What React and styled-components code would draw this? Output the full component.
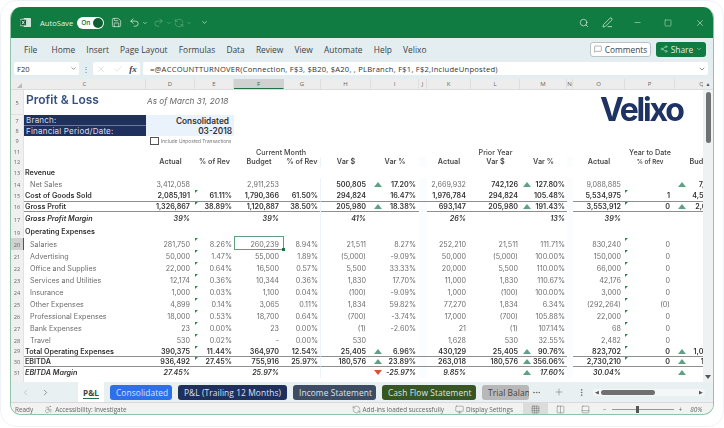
import React from "react";
import styled, { createGlobalStyle } from "styled-components";
import {
  Search,
  PenLine,
  Minus,
  Square,
  X,
  Check,
  Undo2,
  Redo2,
  Save,
  ChevronDown,
  ChevronLeft,
  ChevronRight,
  MessageSquare,
  Share2,
  Plus,
  MoreHorizontal,
  MoreVertical,
  Accessibility,
  RefreshCcw,
  Monitor,
  Grid3x3,
  Columns2,
  PanelBottom,
} from "lucide-react";

const GlobalStyle = createGlobalStyle`
  html, body {
    margin: 0;
    background: #fff;
  }
  * {
    box-sizing: border-box;
  }
`;

const chromeFont = `"Open Sans", "Noto Sans", sans-serif`;
const sheetFont = `Inter, "Open Sans", sans-serif`;

const Page = styled.div`
  width: 724px;
  height: 427px;
  padding: 6px 9px;
  border: 1px solid #eef2f9;
  border-radius: 16px;
  font-family: ${chromeFont};
  filter: blur(0.45px);
`;

const Window = styled.div`
  width: 704px;
  height: 408px;
  display: flex;
  flex-direction: column;
  border-radius: 11px;
  overflow: hidden;
  border: 1px solid #8fc4a8;
  border-top: 0;
  background: #fff;
`;

const TitleBar = styled.div`
  height: 31px;
  flex: none;
  display: flex;
  align-items: center;
  padding: 0 9px;
  background: #107c41;
  color: #fff;
`;

const AppMark = styled.svg`
  width: 11px;
  height: 11px;
  margin-right: 9px;
`;

const TitleLabel = styled.span`
  font-size: 7.6px;
  margin-right: 4px;
  color: #e4f1ea;
`;

const Toggle = styled.div`
  width: 27px;
  height: 12px;
  margin-right: 7px;
  padding: 0 1px 0 4px;
  display: flex;
  align-items: center;
  justify-content: space-between;
  border-radius: 7px;
  background: #fff;
  color: #107c41;
  font-size: 6.5px;
  font-weight: 600;
  &::after {
    content: "";
    width: 10px;
    height: 10px;
    border-radius: 50%;
    background: #0e5e33;
  }
`;

const TitleIcons = styled.div`
  display: flex;
  align-items: center;
  gap: ${(p) => p.$gap || 4}px;
  margin-left: ${(p) => (p.$right ? "auto" : "0")};
  opacity: ${(p) => p.$fade || 1};
`;

const MenuBar = styled.div`
  height: 22px;
  flex: none;
  display: flex;
  align-items: center;
  gap: 11.2px;
  padding: 0 7px 0 13px;
  background: #e4eef1;
  font-size: 8.4px;
  color: #3b4347;
`;

const FileItem = styled.span`
  margin-right: 3px;
`;

const OutlineButton = styled.div`
  margin-left: auto;
  width: 61px;
  height: 15px;
  display: flex;
  align-items: center;
  justify-content: center;
  gap: 3px;
  background: #fff;
  border: 1px solid #b9c2c5;
  border-radius: 3px;
`;

const ShareButton = styled.div`
  margin-left: -6.2px;
  width: 50px;
  height: 15px;
  display: flex;
  align-items: center;
  justify-content: center;
  gap: 3px;
  background: #107c41;
  border-radius: 3px;
  color: #dff0e6;
`;

const FormulaBar = styled.div`
  height: 19px;
  flex: none;
  display: flex;
  align-items: center;
  padding: 0 5px 2px 3px;
  background: #e4eef1;
  font-size: 7.6px;
  color: #333;
`;

const NameBox = styled.div`
  width: 65px;
  height: 13px;
  display: flex;
  align-items: center;
  justify-content: space-between;
  padding: 0 2px 0 3px;
  background: #fff;
  border-radius: 2px;
`;

const Dots = styled.div`
  width: 14px;
  text-align: center;
  color: #777;
  font-size: 8px;
`;

const FormulaButtons = styled.div`
  width: 47px;
  height: 13px;
  margin-right: 3px;
  display: flex;
  align-items: center;
  justify-content: space-around;
  background: #fff;
  border-radius: 2px;
  color: #c4c9cb;
`;

const Fx = styled.span`
  font-family: "Liberation Serif", serif;
  font-style: italic;
  font-size: 9px;
  font-weight: 700;
  color: #444;
`;

const FormulaInput = styled.div`
  flex: 1;
  height: 13px;
  display: flex;
  align-items: center;
  justify-content: space-between;
  padding: 0 2px 0 7px;
  background: #fff;
  border-radius: 2px;
  white-space: nowrap;
  letter-spacing: 0.03em;
`;

const columns = [
  { key: "C", width: 122, pad: 0 },
  { key: "D", width: 49, pad: 5 },
  { key: "E", width: 39, pad: 2 },
  { key: "F", width: 50, pad: 5 },
  { key: "G", width: 37, pad: 2 },
  { key: "H", width: 50, pad: 5 },
  { key: "I", width: 48, pad: 3 },
  { key: "J", width: 8, pad: 0 },
  { key: "K", width: 44, pad: 5 },
  { key: "L", width: 49, pad: 2 },
  { key: "M", width: 47, pad: 2 },
  { key: "N", width: 6, pad: 0 },
  { key: "O", width: 52, pad: 4 },
  { key: "P", width: 50, pad: 5 },
  { key: "Q", width: 54, pad: 2 },
];

const gridTemplate = `13px ${columns.map((c) => c.width + "px").join(" ")}`;

const HeaderStrip = styled.div`
  height: 11px;
  flex: none;
  display: flex;
  background: #ededed;
  border-bottom: 1px solid #dcdcdc;
`;

const Corner = styled.div`
  width: 13px;
  flex: none;
  display: flex;
  align-items: flex-end;
  justify-content: flex-end;
  padding: 0 2px 1px 0;
  &::after {
    content: "";
    border-left: 5px solid transparent;
    border-bottom: 5px solid #bbb;
  }
`;

const HeaderColumns = styled.div`
  flex: 1;
  min-width: 0;
  display: flex;
  overflow: hidden;
`;

const HeaderCell = styled.div`
  width: ${(p) => p.$w}px;
  flex: none;
  text-align: center;
  font-size: 6px;
  line-height: 10px;
  color: ${(p) => (p.$on ? "#1c6b3f" : "#666")};
  background: ${(p) => (p.$on ? "#cfd2d1" : "transparent")};
  border-right: 1px solid ${(p) => (p.$on ? "transparent" : "#dedede")};
  border-bottom: ${(p) => (p.$on ? "1.5px solid #217346" : "0")};
`;

const HeaderScroll = styled.div`
  width: 10px;
  flex: none;
  background: #e9eff1;
  color: #555;
  font-size: 5px;
  line-height: 10px;
  text-align: center;
`;

const SheetArea = styled.div`
  position: relative;
  height: 292px;
  flex: none;
  display: flex;
  overflow: hidden;
`;

const Sheet = styled.div`
  flex: 1;
  min-width: 0;
  overflow: hidden;
  font-family: ${sheetFont};
  font-size: 7.2px;
  color: #3a3a3a;
`;

const Row = styled.div`
  display: grid;
  grid-template-columns: ${gridTemplate};
  width: 745px;
  height: ${(p) => p.$h}px;
`;

const RowNum = styled.div`
  display: flex;
  align-items: flex-end;
  justify-content: center;
  padding-bottom: 1px;
  font-family: ${chromeFont};
  font-size: 5.6px;
  line-height: 8px;
  color: #666;
  background: ${(p) => (p.$on ? "#cfd2d1" : "#f0f0f0")};
  border-bottom: ${(p) => (p.$line ? "1px solid #e0e0e0" : "0")};
  border-right: ${(p) => (p.$on ? "1.5px solid #217346" : "1px solid #e2e2e2")};
  overflow: hidden;
`;

const Cell = styled.div`
  position: relative;
  min-width: 0;
  display: flex;
  align-items: center;
  justify-content: ${(p) => (p.$arrow ? "space-between" : "flex-end")};
  padding: 0 ${(p) => p.$pad}px 0 ${(p) => (p.$arrow ? 3 : 0)}px;
  white-space: nowrap;
  font-weight: ${(p) => (p.$bold ? 600 : 400)};
  font-style: ${(p) => (p.$italic ? "italic" : "normal")};
  color: ${(p) => (p.$bold ? "#333" : "#6d6d6d")};
  background: ${(p) => (p.$tint ? "#fafcfe" : "transparent")};
  border-top: ${(p) => (p.$ruleTop ? "1px solid #8f8f8f" : "0")};
  border-bottom: ${(p) => (p.$ruleBottom ? "1px solid #8f8f8f" : "0")};
  border-right: ${(p) => (p.$divide ? "1px solid #eef3f9" : "0")};
`;

const Flag = styled.i`
  position: absolute;
  top: 0;
  left: 0;
  border-top: 3px solid #17913f;
  border-right: 3px solid transparent;
`;

const Arrow = styled.i`
  width: 0;
  height: 0;
  flex: none;
  border-left: 4px solid transparent;
  border-right: 4px solid transparent;
  border-bottom: ${(p) => (p.$down ? "0" : "5px solid #5da283")};
  border-top: ${(p) => (p.$down ? "5px solid #d6552c" : "0")};
`;

const LabelCell = styled(Cell)`
  justify-content: flex-start;
  padding-left: ${(p) => (p.$indent ? 6 : 1)}px;
  padding-right: 0;
`;

const TitleCell = styled.div`
  display: flex;
  align-items: flex-end;
  padding-left: 2px;
  font-size: 12px;
  font-weight: 600;
  line-height: 16px;
  color: #34507f;
`;

const AsOf = styled.div`
  display: flex;
  align-items: flex-end;
  padding: 0 0 1px 1px;
  white-space: nowrap;
  font-style: italic;
  font-size: 8.2px;
  line-height: 11px;
  color: #666;
`;

const BranchLabel = styled.div`
  display: flex;
  align-items: center;
  padding-left: 2px;
  background: #1f2f5e;
  color: #d8deea;
  font-size: 8.1px;
  letter-spacing: 0.02em;
  border-bottom: ${(p) => (p.$split ? "1px solid #6d7999" : "0")};
`;

const BranchValue = styled.div`
  grid-column: span 2;
  display: flex;
  align-items: center;
  justify-content: flex-end;
  padding-right: ${(p) => p.$pad}px;
  background: #eaf3fc;
  color: #333;
  font-size: 8.3px;
  font-weight: 600;
`;

const CheckRow = styled.div`
  grid-column: span 2;
  display: flex;
  align-items: center;
  gap: 2px;
  padding-left: 4px;
  white-space: nowrap;
  font-size: 4.8px;
  color: #777;
  &::before {
    content: "";
    width: 7px;
    height: 6px;
    flex: none;
    border: 1px solid #555;
  }
`;

const GroupTitle = styled.div`
  grid-column: ${(p) => p.$from} / ${(p) => p.$to};
  display: flex;
  align-items: flex-end;
  justify-content: center;
  padding-left: ${(p) => p.$shift || 0}px;
  font-size: 7.2px;
  font-weight: 500;
  color: #444;
  white-space: nowrap;
`;

const ColTitle = styled(Cell)`
  justify-content: center;
  padding: 0;
  font-size: ${(p) => (p.$small ? 6.2 : 7.2)}px;
  font-weight: 600;
  color: #484848;
`;

const Logo = styled.div`
  position: absolute;
  top: 2px;
  left: 589px;
  font-family: Inter, sans-serif;
  font-size: 32px;
  font-weight: 700;
  letter-spacing: -2.2px;
  line-height: 36px;
  color: #1f3264;
`;

const Selection = styled.div`
  position: absolute;
  left: 223px;
  top: 146px;
  width: 50px;
  height: 14px;
  border: 1.5px solid #5d9e7f;
  &::after {
    content: "";
    position: absolute;
    right: -2px;
    bottom: -2px;
    width: 3px;
    height: 3px;
    background: #217346;
  }
`;

const ScrollTrack = styled.div`
  position: relative;
  width: 10px;
  flex: none;
  background: #eef2f3;
  &::before {
    content: "";
    position: absolute;
    top: 2px;
    left: 3px;
    width: 5px;
    height: 51px;
    border-radius: 3px;
    background: #6f7273;
  }
  &::after {
    content: "";
    position: absolute;
    bottom: 3px;
    left: 2px;
    border-left: 3px solid transparent;
    border-right: 3px solid transparent;
    border-top: 4px solid #555;
  }
`;

const TabBar = styled.div`
  height: 20px;
  flex: none;
  display: flex;
  align-items: center;
  padding-left: 9px;
  background: #e9f0f1;
  color: #777;
`;

const TabNav = styled.div`
  width: 58px;
  flex: none;
  display: flex;
  gap: 11px;
  padding-left: 1px;
`;

const ActiveTab = styled.div`
  position: relative;
  width: 26px;
  height: 20px;
  flex: none;
  margin-right: 6px;
  display: flex;
  align-items: center;
  justify-content: center;
  background: #fff;
  color: #3c4a43;
  font-size: 8.2px;
  font-weight: 700;
  &::after {
    content: "";
    position: absolute;
    left: 5px;
    right: 5px;
    bottom: 3px;
    height: 1.5px;
    background: #217346;
  }
`;

const SheetTab = styled.div`
  width: ${(p) => p.$w}px;
  height: 15px;
  flex: none;
  margin-right: 6px;
  padding-left: 6px;
  display: flex;
  align-items: center;
  overflow: hidden;
  white-space: nowrap;
  border-radius: 3px;
  background: ${(p) => p.$bg};
  color: ${(p) => p.$fg || "#dbe4ee"};
  font-size: 8.4px;
  letter-spacing: 0.01em;
`;

const TabTools = styled.div`
  width: 58px;
  flex: none;
  margin-left: -3px;
  display: flex;
  justify-content: space-between;
  align-items: center;
  padding-right: 4px;
  color: #666;
`;

const HScroll = styled.div`
  width: 112px;
  height: 7px;
  flex: none;
  margin-left: 3px;
  display: flex;
  align-items: center;
  justify-content: space-between;
  padding: 0 2px;
  border-radius: 4px;
  background: #f4f7f8;
  color: #555;
  font-size: 5px;
`;

const HThumb = styled.div`
  width: 54px;
  height: 5px;
  margin-left: 2px;
  margin-right: auto;
  border-radius: 3px;
  background: #707070;
`;

const StatusBar = styled.div`
  height: 13px;
  flex: none;
  display: flex;
  align-items: center;
  padding-left: 4px;
  background: #f2f2f2;
  border-top: 1px solid #d9d9d9;
  font-size: 6.4px;
  color: #666;
  white-space: nowrap;
`;

const StatusItem = styled.div`
  display: flex;
  align-items: center;
  gap: 2px;
  margin-left: ${(p) => p.$gap || 0}px;
`;

const ViewIcon = styled.div`
  width: 25px;
  height: 13px;
  flex: none;
  display: flex;
  align-items: center;
  justify-content: center;
  margin-left: ${(p) => p.$gap || 0}px;
  background: ${(p) => (p.$on ? "#dcdcdc" : "transparent")};
  color: #555;
`;

const ZoomBar = styled.div`
  width: 62px;
  height: 1px;
  margin: 0 3px;
  position: relative;
  background: #999;
  &::after {
    content: "";
    position: absolute;
    left: 24px;
    top: -3px;
    width: 3px;
    height: 7px;
    background: #555;
  }
`;

const U = "up";
const D = "down";

// [value, arrow] or just the value, per column D..Q
const rowsData = [
  {
    n: 14, h: 12, label: "Net Sales", indent: true,
    D: "3,412,058", F: "2,911,253", H: "500,805", I: ["17.20%", U], K: "2,669,932", L: "742,126",
    M: ["127.80%", U], O: "9,088,885", Q: ["7,111,221", U],
    boldKeys: ["H", "I", "L", "M", "Q"],
  },
  {
    n: 15, h: 10.5, label: "Cost of Goods Sold", bold: true, flags: true,
    D: "2,085,191", E: "61.11%", F: "1,790,366", G: "61.50%", H: "294,824", I: "16.47%", K: "1,976,784",
    L: "294,824", M: "105.48%", O: "5,534,975", P: "1", Q: "4,580,221",
  },
  {
    n: 16, h: 10.5, label: "Gross Profit", bold: true, flags: true, ruleTop: true, ruleBottom: true,
    D: "1,326,867", E: "38.89%", F: "1,120,887", G: "38.50%", H: "205,980", I: ["18.38%", U], K: "693,147",
    L: "205,980", M: ["191.43%", U], O: "3,553,912", P: "0", Q: ["2,611,810", U],
  },
  {
    n: 17, h: 14, label: "Gross Profit Margin", bold: true, italic: true,
    D: "39%", F: "39%", H: "41%", K: "26%", M: "13%", O: "39%",
  },
  { n: 19, h: 13, label: "Operating Expenses", bold: true },
  {
    n: 20, h: 12, label: "Salaries", indent: true, flags: true, on: true,
    D: "281,750", E: "8.26%", F: "260,239", G: "8.94%", H: "21,511", I: "8.27%", K: "252,210", L: "21,511",
    M: "111.71%", O: "830,240", P: "0",
  },
  {
    n: 21, h: 12, label: "Advertising", indent: true, flags: true,
    D: "50,000", E: "1.47%", F: "55,000", G: "1.89%", H: "(5,000)", I: "-9.09%", K: "50,000", L: "(5,000)",
    M: "100.00%", O: "150,000", P: "0",
  },
  {
    n: 22, h: 12, label: "Office and Supplies", indent: true, flags: true,
    D: "22,000", E: "0.64%", F: "16,500", G: "0.57%", H: "5,500", I: "33.33%", K: "20,000", L: "5,500",
    M: "110.00%", O: "66,000", P: "0",
  },
  {
    n: 23, h: 12, label: "Services and Utilities", indent: true, flags: true,
    D: "12,174", E: "0.36%", F: "10,344", G: "0.36%", H: "1,830", I: "17.70%", K: "11,000", L: "1,830",
    M: "110.67%", O: "42,176", P: "0",
  },
  {
    n: 24, h: 12, label: "Insurance", indent: true, flags: true,
    D: "1,000", E: "0.03%", F: "1,100", G: "0.04%", H: "(100)", I: "-9.09%", K: "1,000", L: "(100)",
    M: "100.00%", O: "3,000", P: "0",
  },
  {
    n: 25, h: 12, label: "Other Expenses", indent: true, flags: true,
    D: "4,899", E: "0.14%", F: "3,065", G: "0.11%", H: "1,834", I: "59.82%", K: "77,270", L: "1,834",
    M: "6.34%", O: "(292,264)", P: "(0)",
  },
  {
    n: 26, h: 12, label: "Professional Expenses", indent: true, flags: true,
    D: "18,000", E: "0.53%", F: "18,700", G: "0.64%", H: "(700)", I: "-3.74%", K: "17,000", L: "(700)",
    M: "105.88%", O: "22,000", P: "0",
  },
  {
    n: 27, h: 12, label: "Bank Expenses", indent: true, flags: true,
    D: "23", E: "0.00%", F: "23", G: "0.00%", H: "(1)", I: "-2.60%", K: "21", L: "(1)",
    M: "107.14%", O: "68", P: "0",
  },
  {
    n: 28, h: 12, label: "Travel", indent: true, flags: true,
    D: "530", E: "0.02%", F: "-", G: "0.00%", H: "530", K: "1,628", L: "530",
    M: "32.55%", O: "2,482", P: "0",
  },
  {
    n: 29, h: 10, label: "Total Operating Expenses", bold: true, flags: true,
    D: "390,375", E: "11.44%", F: "364,970", G: "12.54%", H: "25,405", I: ["6.96%", U], K: "430,129", L: "25,405",
    M: ["90.76%", U], O: "823,702", P: "0", Q: ["1,094,310", U],
  },
  {
    n: 30, h: 11, label: "EBITDA", bold: true, flags: true, ruleTop: true, ruleBottom: true,
    D: "936,492", E: "27.45%", F: "755,916", G: "25.97%", H: "180,576", I: ["23.89%", U], K: "263,018", L: "180,576",
    M: ["356.06%", U], O: "2,730,210", P: "0", Q: ["155,916", U],
  },
  {
    n: 31, h: 11, label: "EBITDA Margin", bold: true, italic: true,
    D: "27.45%", F: "25.97%", I: ["-25.97%", D], K: "9.85%", M: ["17.60%", U], O: "30.04%", Q: ["", U],
  },
];

const headerCells = {
  D: "Actual", E: "% of Rev", F: "Budget", G: "% of Rev", H: "Var $", I: "Var %", K: "Actual",
  L: "Var $", M: "Var %", O: "Actual", P: "% of Rev", Q: "Budget",
};

function DataRow({ row }) {
  return (
    <Row $h={row.h}>
      <RowNum $on={row.on}>{row.n}</RowNum>
      <LabelCell
        $indent={row.indent}
        $bold={row.bold}
        $italic={row.italic}
        $ruleTop={row.ruleTop}
        $ruleBottom={row.ruleBottom}
      >
        {row.label}
      </LabelCell>
      {columns.slice(1).map((c) => {
        const raw = row[c.key];
        const [value, arrow] = Array.isArray(raw) ? raw : [raw];
        const bold = row.bold || (row.boldKeys && row.boldKeys.includes(c.key));
        const spacer = c.key === "J" || c.key === "N";
        return (
          <Cell
            key={c.key}
            $pad={c.pad}
            $bold={bold}
            $italic={row.italic}
            $arrow={!!arrow}
            $tint={spacer}
            $divide={c.key === "G"}
            $ruleTop={row.ruleTop && c.key !== "N"}
            $ruleBottom={row.ruleBottom && c.key !== "N"}
          >
            {row.flags && (c.key === "E" || c.key === "P") && <Flag />}
            {arrow && <Arrow $down={arrow === D} />}
            {value}
          </Cell>
        );
      })}
    </Row>
  );
}

function TopRows() {
  return (
    <>
      <Row $h={18}>
        <RowNum>5</RowNum>
        <TitleCell>Profit &amp; Loss</TitleCell>
        <AsOf>As of March 31, 2018</AsOf>
      </Row>
      <Row $h={7}>
        <RowNum $line />
      </Row>
      <Row $h={11}>
        <RowNum>7</RowNum>
        <BranchLabel $split>Branch:</BranchLabel>
        <BranchValue $pad={5}>Consolidated</BranchValue>
      </Row>
      <Row $h={10}>
        <RowNum>8</RowNum>
        <BranchLabel>Financial Period/Date:</BranchLabel>
        <BranchValue $pad={2}>03-2018</BranchValue>
      </Row>
      <Row $h={10}>
        <RowNum>9</RowNum>
        <div />
        <CheckRow>Include Unposted Transactions</CheckRow>
      </Row>
      <Row $h={10.5}>
        <RowNum>11</RowNum>
        <GroupTitle $from={5} $to={7} $shift={7}>Current Month</GroupTitle>
        <GroupTitle $from={11} $to={12}>Prior Year</GroupTitle>
        <GroupTitle $from={15} $to={16}>Year to Date</GroupTitle>
      </Row>
      <Row $h={10.5}>
        <RowNum>12</RowNum>
        <div />
        {columns.slice(1).map((c) => (
          <ColTitle key={c.key} $pad={0} $small={c.key === "P"} $divide={c.key === "G"} $tint={c.key === "J" || c.key === "N"}>
            {headerCells[c.key]}
          </ColTitle>
        ))}
      </Row>
      <Row $h={11}>
        <RowNum>13</RowNum>
        <LabelCell $bold>Revenue</LabelCell>
      </Row>
    </>
  );
}

export default function App() {
  return (
    <>
      <GlobalStyle />
      <Page>
        <Window>
          <TitleBar>
            <AppMark viewBox="0 0 12 12">
              <rect x="4" y="1" width="8" height="10" rx="1" fill="#cfe5d8" />
              <rect x="0" y="2.5" width="7" height="7" rx="1" fill="#0b4f2a" stroke="#fff" strokeWidth="0.7" />
              <path d="M2 4l3 4M5 4L2 8" stroke="#fff" strokeWidth="0.9" />
            </AppMark>
            <TitleLabel>AutoSave</TitleLabel>
            <Toggle>On</Toggle>
            <TitleIcons $gap={7}>
              <Save size={11} strokeWidth={1.3} />
              <TitleIcons $gap={2}>
                <Undo2 size={11} strokeWidth={1.4} />
                <ChevronDown size={6} />
              </TitleIcons>
            </TitleIcons>
            <TitleIcons $gap={2} $fade={0.45}>
              <Redo2 size={11} strokeWidth={1.2} style={{ marginLeft: 5 }} />
              <ChevronDown size={6} />
              <RefreshCcw size={10} strokeWidth={1.2} />
              <ChevronDown size={6} />
            </TitleIcons>
            <TitleIcons style={{ marginLeft: 9 }}>
              <ChevronDown size={7} />
            </TitleIcons>
            <TitleIcons $right $gap={16}>
              <Search size={10} strokeWidth={1.4} style={{ marginRight: -3 }} />
              <PenLine size={11} strokeWidth={1.4} />
              <Minus size={9} strokeWidth={1.2} style={{ marginLeft: 4 }} />
              <Square size={8} strokeWidth={1.2} style={{ marginLeft: 6 }} />
              <X size={10} strokeWidth={1.2} style={{ marginLeft: 7, marginRight: -1 }} />
            </TitleIcons>
          </TitleBar>

          <MenuBar>
            <FileItem>File</FileItem>
            <span>Home</span>
            <span>Insert</span>
            <span>Page Layout</span>
            <span>Formulas</span>
            <span>Data</span>
            <span>Review</span>
            <span>View</span>
            <span>Automate</span>
            <span>Help</span>
            <span>Velixo</span>
            <OutlineButton>
              <MessageSquare size={8} strokeWidth={1.2} />
              Comments
            </OutlineButton>
            <ShareButton>
              <Share2 size={8} strokeWidth={1.3} />
              Share
              <ChevronDown size={6} />
            </ShareButton>
          </MenuBar>

          <FormulaBar>
            <NameBox>
              F20
              <ChevronDown size={7} color="#555" />
            </NameBox>
            <Dots>⋮</Dots>
            <FormulaButtons>
              <X size={10} strokeWidth={1.1} />
              <Check size={10} strokeWidth={1.1} />
              <Fx>fx</Fx>
            </FormulaButtons>
            <FormulaInput>
              =@ACCOUNTTURNOVER(Connection, F$3, $B20, $A20, , PLBranch, F$1, F$2,IncludeUnposted)
              <ChevronDown size={8} color="#555" />
            </FormulaInput>
          </FormulaBar>

          <HeaderStrip>
            <Corner />
            <HeaderColumns>
              {columns.map((c) => (
                <HeaderCell key={c.key} $w={c.width} $on={c.key === "F"}>
                  {c.key}
                </HeaderCell>
              ))}
            </HeaderColumns>
            <HeaderScroll>▲</HeaderScroll>
          </HeaderStrip>

          <SheetArea>
            <Sheet>
              <TopRows />
              {rowsData.map((row) => (
                <DataRow key={row.n} row={row} />
              ))}
              <Row $h={4}>
                <RowNum />
              </Row>
            </Sheet>
            <Logo>Velixo</Logo>
            <Selection />
            <ScrollTrack />
          </SheetArea>

          <TabBar>
            <TabNav>
              <ChevronLeft size={9} color="#bbb" />
              <ChevronRight size={9} />
            </TabNav>
            <ActiveTab>P&amp;L</ActiveTab>
            <SheetTab $w={62} $bg="#2f6fe8">Consolidated</SheetTab>
            <SheetTab $w={109} $bg="#1f2f5e">P&amp;L (Trailing 12 Months)</SheetTab>
            <SheetTab $w={83} $bg="#3d4c63">Income Statement</SheetTab>
            <SheetTab $w={94} $bg="#375623">Cash Flow Statement</SheetTab>
            <SheetTab $w={47} $bg="#b8b8b8" $fg="#444">Trial Balance</SheetTab>
            <TabTools>
              <MoreHorizontal size={9} />
              <Plus size={10} strokeWidth={1.2} />
              <MoreVertical size={9} />
            </TabTools>
            <HScroll>
              ◀
              <HThumb />
              ▶
            </HScroll>
          </TabBar>

          <StatusBar>
            Ready
            <StatusItem $gap={11}>
              <Accessibility size={9} strokeWidth={1.2} />
              Accessibility: Investigate
            </StatusItem>
            <StatusItem $gap={225}>
              <RefreshCcw size={9} strokeWidth={1.2} />
              Add-ins loaded successfully
            </StatusItem>
            <StatusItem $gap={11}>
              <Monitor size={9} strokeWidth={1.2} />
              Display Settings
            </StatusItem>
            <ViewIcon $on $gap={10}>
              <Grid3x3 size={9} strokeWidth={1.1} />
            </ViewIcon>
            <ViewIcon>
              <Columns2 size={9} strokeWidth={1.1} />
            </ViewIcon>
            <ViewIcon>
              <PanelBottom size={9} strokeWidth={1.1} />
            </ViewIcon>
            <StatusItem $gap={5}>
              −
              <ZoomBar />
              +
            </StatusItem>
            <StatusItem $gap={8}>
              <em>80%</em>
            </StatusItem>
          </StatusBar>
        </Window>
      </Page>
    </>
  );
}
